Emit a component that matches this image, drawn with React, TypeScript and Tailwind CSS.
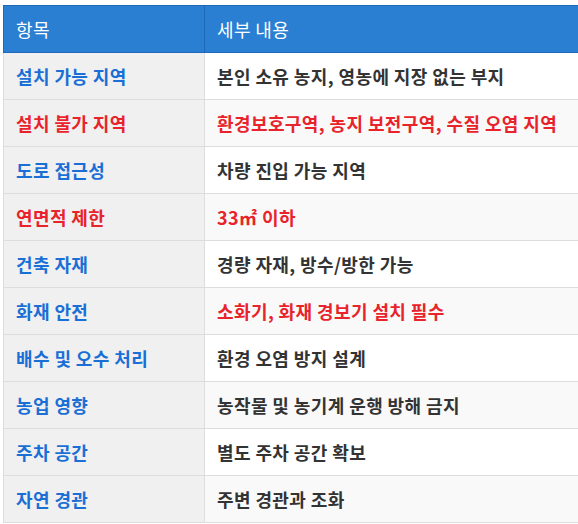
import React from 'react';

type Row = { item: string; detail: string; warn?: boolean; redItem?: boolean };

const rows: Row[] = [
  { item: '설치 가능 지역', detail: '본인 소유 농지, 영농에 지장 없는 부지' },
  { item: '설치 불가 지역', detail: '환경보호구역, 농지 보전구역, 수질 오염 지역', warn: true, redItem: true },
  { item: '도로 접근성', detail: '차량 진입 가능 지역' },
  { item: '연면적 제한', detail: '33㎡ 이하', warn: true, redItem: true },
  { item: '건축 자재', detail: '경량 자재, 방수/방한 가능' },
  { item: '화재 안전', detail: '소화기, 화재 경보기 설치 필수', warn: true },
  { item: '배수 및 오수 처리', detail: '환경 오염 방지 설계' },
  { item: '농업 영향', detail: '농작물 및 농기계 운행 방해 금지' },
  { item: '주차 공간', detail: '별도 주차 공간 확보' },
  { item: '자연 경관', detail: '주변 경관과 조화' },
];

export default function App() {
  return (
    <div className="min-h-screen bg-white pt-[5px] pl-[3px] overflow-hidden font-['Noto_Sans_CJK_KR','Noto_Sans',sans-serif]">
      <table className="w-[580px] border-collapse text-[18px] tracking-[0.4px] leading-[24px]">
        <thead>
          <tr className="bg-[#2a7fd3] text-white h-[47px]">
            <th className="w-[201px] border border-[#1f6ab8] px-[12px] text-left font-normal">항목</th>
            <th className="border border-[#1f6ab8] px-[12px] text-left font-normal">세부 내용</th>
          </tr>
        </thead>
        <tbody>
          {rows.map((r, i) => (
            <tr key={r.item} className="h-[47px]">
              <td
                className={`border border-[#dddddd] bg-[#f0f0f0] px-[12px] font-bold ${
                  r.redItem ? 'text-[#e8232b]' : 'text-[#1a6fd6]'
                }`}
              >
                {r.item}
              </td>
              <td
                className={`border border-[#dddddd] px-[12px] font-bold ${
                  i % 2 === 0 ? 'bg-white' : 'bg-[#f9f9f9]'
                } ${r.warn ? 'text-[#e8232b]' : 'text-[#333333]'}`}
              >
                {r.detail}
              </td>
            </tr>
          ))}
        </tbody>
      </table>
    </div>
  );
}
